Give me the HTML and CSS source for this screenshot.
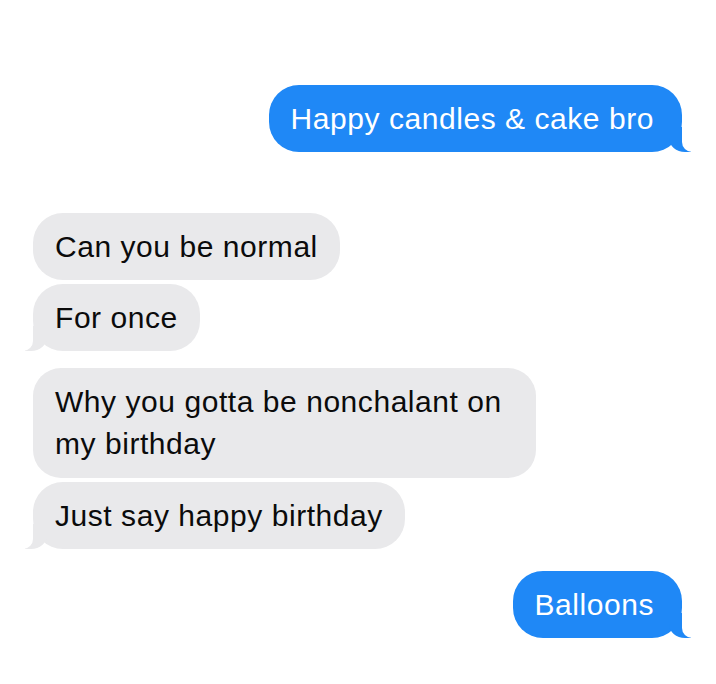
FILE: index.html
```html
<!DOCTYPE html>
<html>
<head>
<meta charset="utf-8">
<link rel="stylesheet" href="styles.css">
</head>
<body>
<div class="chat">
  <div class="bubble sent tail first">Happy candles &amp; cake bro</div>
  <div class="group">
    <div class="bubble recv">Can you be normal</div>
    <div class="bubble recv tail">For once</div>
  </div>
  <div class="group">
    <div class="bubble recv wide">Why you gotta be nonchalant on my birthday</div>
    <div class="bubble recv tail">Just say happy birthday</div>
  </div>
  <div class="bubble sent tail last">Balloons</div>
</div>
</body>
</html>
```
FILE: styles.css
```css
html, body {
  margin: 0;
  padding: 0;
  background: #ffffff;
}
.chat {
  width: 716px;
  height: 684px;
  box-sizing: border-box;
  padding: 85px 34px 0 33px;
  display: flex;
  flex-direction: column;
  font-family: "Liberation Sans", Arial, sans-serif;
  font-size: 30px;
  letter-spacing: 0.55px;
  line-height: 42px;
}
.group {
  display: flex;
  flex-direction: column;
  align-items: flex-start;
  gap: 4px;
}
.group + .group {
  margin-top: 17px;
}
.bubble {
  position: relative;
  padding: 13px 22px 12px 22px;
  border-radius: 30px;
  box-sizing: border-box;
}
.sent {
  align-self: flex-end;
  background: #1f88f6;
  color: #ffffff;
  padding-right: 28px;
}
.recv {
  background: #e9e9eb;
  color: #0b0b0b;
}
.wide {
  width: 503px;
  border-radius: 28px;
  padding-bottom: 13px;
}
.first {
  margin-bottom: 61px;
}
.last {
  margin-top: 22px;
}
.sent.tail::before,
.sent.tail::after,
.recv.tail::before,
.recv.tail::after {
  content: "";
  position: absolute;
  bottom: 0;
  height: 25px;
}
.sent.tail::before {
  right: -9px;
  width: 22px;
  background: #1f88f6;
  border-bottom-left-radius: 16px 14px;
}
.sent.tail::after {
  right: -26px;
  width: 26px;
  background: #ffffff;
  border-bottom-left-radius: 10px;
}
.recv.tail::before {
  left: -8px;
  width: 22px;
  background: #e9e9eb;
  border-bottom-right-radius: 16px 14px;
}
.recv.tail::after {
  left: -26px;
  width: 26px;
  background: #ffffff;
  border-bottom-right-radius: 10px;
}
```
